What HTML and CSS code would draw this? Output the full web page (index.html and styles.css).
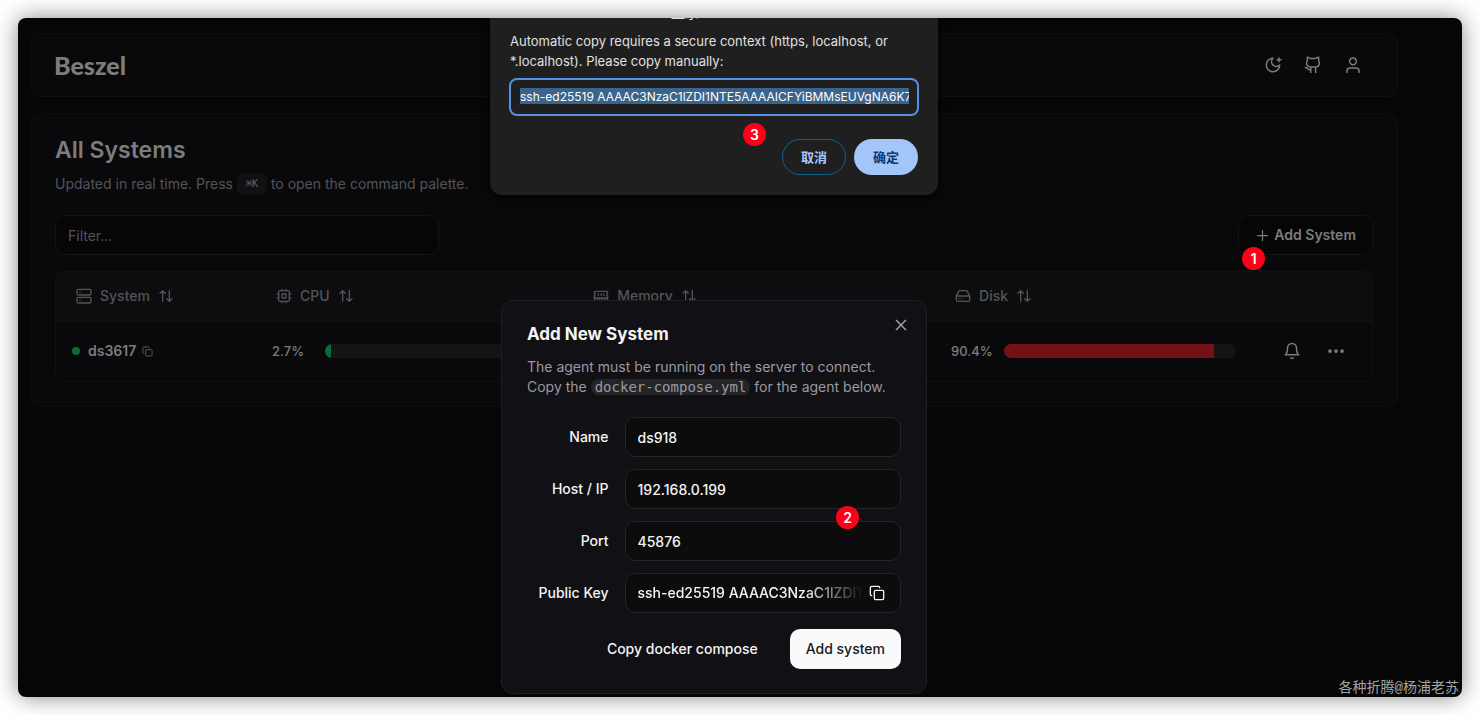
FILE: index.html
```html
<!DOCTYPE html>
<html lang="en">
<head>
<meta charset="utf-8">
<title>Beszel</title>
<link rel="stylesheet" href="styles.css">
</head>
<body>
<svg class="sprite" aria-hidden="true">
  <symbol id="sort" viewBox="0 0 24 24"><path d="m21 16-4 4-4-4M17 20V4M3 8l4-4 4 4M7 4v16"/></symbol>
  <symbol id="copy" viewBox="0 0 24 24"><rect x="8" y="8" width="14" height="14" rx="2"/><path d="M4 16c-1.100 0-2-.9-2-2V4c0-1.100.9-2 2-2h10c1.100 0 2 .9 2 2"/></symbol>
</svg>
<div class="screen">
  <div class="container">
    <header class="navbar">
      <a class="logo" href="#">Beszel</a>
      <nav class="nav-actions">
        <button class="icon-button" aria-label="Theme"><svg class="icon icon-lg" viewBox="0 0 24 24"><path d="M12 3a6 6 0 0 0 9 9 9 9 0 1 1-9-9M20 2.500v5M22.500 5h-5"/></svg></button>
        <a class="icon-button" href="#" aria-label="GitHub"><svg class="icon icon-lg" viewBox="0 0 24 24"><path d="M15.500 22v-7.500c3-.3 5-2 5-5 0-1.200-.4-2.200-1-3 .3-1.400.3-3-.2-5L15.500 3.200h-7L4.700 1.500c-.5 2-.5 3.600-.2 5-.6.8-1 1.800-1 3 0 3 2 4.700 5.500 5V22M9 18.700C5.500 19 4.600 15.300 1.800 15.300M9 14.500h6.500"/></svg></a>
        <button class="icon-button" aria-label="Account"><svg class="icon icon-lg" viewBox="0 0 24 24"><circle cx="12" cy="7" r="4.500"/><path d="M20 22v-2a4 4 0 0 0-4-4H8a4 4 0 0 0-4 4v2"/></svg></button>
      </nav>
    </header>

    <main class="card">
      <h1 class="card-title">All Systems</h1>
      <p class="card-text">Updated in real time. Press <kbd class="kbd">⌘K</kbd> to open the command palette.</p>
      <div class="toolbar">
        <input class="filter" type="text" placeholder="Filter..." aria-label="Filter">
        <div class="add-wrap">
          <button class="add-button"><svg class="icon icon-md" viewBox="0 0 24 24"><path d="M4 12h16M12 4v16"/></svg>Add System</button>
          <span class="step step-1">1</span>
        </div>
      </div>
      <div class="table-frame">
        <table class="table">
          <colgroup><col class="col-system"><col class="col-cpu"><col class="col-memory"><col class="col-disk"><col></colgroup>
          <thead>
            <tr>
              <th><button class="sort"><svg class="icon" viewBox="0 0 24 24"><rect x="1.500" y="2" width="21" height="8.500" rx="2"/><rect x="1.500" y="14" width="21" height="8.500" rx="2"/><path d="M6 6.200v.1M6 18.200v.1"/></svg>System<svg class="icon"><use href="#sort"/></svg></button></th>
              <th><button class="sort"><svg class="icon" viewBox="0 0 24 24"><rect x="4" y="4" width="16" height="16" rx="2"/><rect x="9" y="9" width="6" height="6" rx="1"/><path d="M15 2v2M15 20v2M2 15h2M2 9h2M20 15h2M20 9h2M9 2v2M9 20v2"/></svg>CPU<svg class="icon"><use href="#sort"/></svg></button></th>
              <th><button class="sort"><svg class="icon" viewBox="0 0 24 24"><path d="M6 19v-3M10 19v-3M14 19v-3M18 19v-3M8 11V9M16 11V9M12 11V9M2 15h20M2 7a2 2 0 0 1 2-2h16a2 2 0 0 1 2 2v1.100a2 2 0 0 0 0 3.800V17a2 2 0 0 1-2 2H4a2 2 0 0 1-2-2v-5.100a2 2 0 0 0 0-3.800Z"/></svg>Memory<svg class="icon"><use href="#sort"/></svg></button></th>
              <th><button class="sort"><svg class="icon" viewBox="0 0 24 24"><path d="M22 12H2M5.450 5.110 2 12v6a2 2 0 0 0 2 2h16a2 2 0 0 0 2-2v-6l-3.450-6.890A2 2 0 0 0 16.760 4H7.240a2 2 0 0 0-1.790 1.110ZM6 16h.01M10 16h.01"/></svg>Disk<svg class="icon"><use href="#sort"/></svg></button></th>
              <th></th>
            </tr>
          </thead>
          <tbody>
            <tr>
              <td><div class="system"><span class="dot"></span>ds3617<button class="copy-name" aria-label="Copy name"><svg class="icon icon-sm"><use href="#copy"/></svg></button></div></td>
              <td><div class="meter"><span class="value">2.7%</span><span class="track"><span class="fill ok" style="width:2.7%"></span></span></div></td>
              <td><div class="meter"><span class="track"></span></div></td>
              <td><div class="meter"><span class="value">90.4%</span><span class="track"><span class="fill high" style="width:90.4%"></span></span></div></td>
              <td class="actions-cell"><div class="actions">
                <button class="icon-button" aria-label="Alerts"><svg class="icon icon-lg" viewBox="0 0 24 24"><path d="M6 8a6 6 0 0 1 12 0c0 7 3 9 3 9H3s3-2 3-9M10.300 21a1.940 1.940 0 0 0 3.400 0"/></svg></button>
                <button class="icon-button" aria-label="More"><svg class="icon icon-lg dots" viewBox="0 0 24 24"><circle cx="4" cy="12" r="2.500"/><circle cx="12" cy="12" r="2.500"/><circle cx="20" cy="12" r="2.500"/></svg></button>
              </div></td>
            </tr>
          </tbody>
        </table>
      </div>
    </main>

    <section class="dialog" role="dialog" aria-labelledby="dialog-title">
      <button class="close" aria-label="Close"><svg class="icon" viewBox="0 0 24 24"><path d="M5 5l14 14M19 5 5 19"/></svg></button>
      <h2 class="dialog-title" id="dialog-title">Add New System</h2>
      <p class="dialog-text">The agent must be running on the server to connect. Copy the <code class="code">docker-compose.yml</code> for the agent below.</p>
      <form class="form">
        <label class="label" for="name">Name</label>
        <input class="field" id="name" type="text" value="ds918">
        <label class="label" for="host">Host / IP</label>
        <input class="field" id="host" type="text" value="192.168.0.199">
        <label class="label" for="port">Port</label>
        <input class="field" id="port" type="text" value="45876">
        <label class="label" for="key">Public Key</label>
        <div class="field key-field">
          <input class="key-input" id="key" type="text" readonly value="ssh-ed25519 AAAAC3NzaC1lZDI1NTE5AAAAICFYiBMMsEUVgNA6K7">
          <button class="key-copy" type="button" aria-label="Copy key"><svg class="icon"><use href="#copy"/></svg></button>
        </div>
        <div class="form-actions">
          <button class="ghost" type="button">Copy docker compose</button>
          <button class="primary" type="button">Add system</button>
        </div>
      </form>
      <span class="step step-2">2</span>
    </section>

    <section class="prompt" role="dialog" aria-label="Copy manually">
      <div class="prompt-title">显示</div>
      <label class="prompt-text" for="prompt-value">Automatic copy requires a secure context (https, localhost, or *.localhost). Please copy manually:</label>
      <input class="prompt-input" id="prompt-value" type="text" value="ssh-ed25519 AAAAC3NzaC1lZDI1NTE5AAAAICFYiBMMsEUVgNA6K7">
      <div class="prompt-actions">
        <button class="pill cancel">取消</button>
        <button class="pill confirm">确定</button>
      </div>
      <span class="step step-3">3</span>
    </section>
  </div>
  <div class="watermark">各种折腾@杨浦老苏</div>
</div>
</body>
</html>
```
FILE: styles.css
```css
* { box-sizing: border-box; }
body { margin: 0; padding: 18px; background: #fff; font-family: Inter, "Noto Sans CJK SC", sans-serif; font-size: 14px; line-height: 20px; color: #7c7c7d; }
button, input { font: inherit; color: inherit; background: none; border: 0; padding: 0; margin: 0; outline: 0; }
h1, h2, p { margin: 0; }
.sprite { position: absolute; width: 0; height: 0; }
.screen { position: relative; min-height: calc(100vh - 36px); padding: 15px 64px 15px 12px; border-radius: 8px; background: #060606; box-shadow: 0 0 22px rgba(0, 0, 0, .48); overflow: hidden; }
.container { display: flex; flex-direction: column; gap: 16px; }
.icon { width: 16px; height: 16px; flex: none; fill: none; stroke: currentColor; stroke-width: 2; stroke-linecap: round; stroke-linejoin: round; }
.icon-lg { width: 18px; height: 18px; }
.icon-md { width: 15px; height: 15px; }
.icon-sm { width: 11px; height: 11px; }
.dots { fill: currentColor; stroke: none; }
.icon-button { display: flex; align-items: center; justify-content: center; width: 40px; height: 40px; color: inherit; }

.navbar { display: flex; align-items: center; justify-content: space-between; height: 64px; padding: 0 24px 0 23px; border: 1px solid #101012; border-radius: 10px; background: #09090b; }
.logo { font-family: Lato, sans-serif; font-size: 25px; font-weight: 900; line-height: 32px; color: #7c7c7c; text-decoration: none; }
.nav-actions { display: flex; }

.card { padding: 24px; border: 1px solid #101012; border-radius: 12px; background: #09090b; }
.card-title { font-size: 23px; font-weight: 600; line-height: 24px; }
.card-text { margin-top: 12px; color: #545458; }
.kbd { display: inline-block; height: 20px; padding: 0 8px; border-radius: 4px; border: 1px solid #121214; background: #111113; font: 10px/18px "DejaVu Sans Mono", "DejaVu Sans", monospace; color: #646468; vertical-align: top; }
.toolbar { display: flex; align-items: center; justify-content: space-between; margin: 21px 0 16px; }
.filter { width: 384px; height: 40px; padding: 0 12px; border: 1px solid #131315; border-radius: 10px; background: #060606; }
.filter::placeholder { color: #545458; opacity: 1; }
.add-wrap { position: relative; }
.add-button { display: flex; align-items: center; gap: 4px; height: 40px; padding: 0 16px; border: 1px solid #131315; border-radius: 10px; background: #060606; font-weight: 600; }

.table-frame { border: 1px solid #111113; border-radius: 10px; overflow: hidden; }
.table { width: 100%; border-collapse: collapse; table-layout: fixed; }
.table th, .table td { padding: 0 16px; text-align: left; font-weight: 500; }
.table th { height: 49px; background: #0d0d0f; border-bottom: 1px solid #111113; color: #545458; }
.table td { height: 60px; }
.col-system { width: 15.2%; }
.col-cpu { width: 24.1%; }
.col-memory { width: 27.5%; }
.col-disk { width: 24.1%; }
.sort { display: flex; align-items: center; gap: 8px; padding: 0 4px; font-weight: 500; }
.sort .icon { stroke-width: 2; }
.system { display: flex; align-items: center; font-weight: 600; }
.dot { width: 8px; height: 8px; margin-right: 8px; border-radius: 50%; background: #0a6b37; }
.copy-name { display: flex; margin-left: 6px; color: #606063; }
.meter { display: flex; align-items: center; gap: 12px; }
.value { width: 41px; flex: none; font-size: 13px; }
.track { flex: 1; height: 14px; border-radius: 7px; background: #141416; overflow: hidden; }
.fill { display: block; height: 100%; }
.ok { background: #0a6b37; }
.high { background: #731116; }
.table .actions-cell { padding-left: 0; }
.actions { display: flex; justify-content: flex-end; gap: 4px; }

.step { position: absolute; width: 23px; height: 23px; border-radius: 50%; background: #ff0019; color: #fff; font: 600 14px/23px Inter, sans-serif; text-align: center; }
.step-1 { left: 4px; top: 32px; }
.step-2 { right: 67px; top: 205px; }
.step-3 { left: 253px; top: 105px; }

.dialog { position: absolute; left: 483px; bottom: 3px; width: 426px; padding: 24px 25px; border: 1px solid #1f1f22; border-radius: 12px; background: #111014; color: #f4f4f5; }
.dialog-title { font-size: 17px; font-weight: 700; line-height: 18px; }
.dialog-text { margin: 14px 0 20px; color: #9a9aa2; }
.code { padding: 0 4px; border-radius: 8px; background: #252528; font: 14px/16px "DejaVu Sans Mono", monospace; }
.close { position: absolute; right: 17px; top: 16px; display: flex; color: #a8a8ab; }
.form { display: grid; grid-template-columns: repeat(4, 1fr); gap: 12px 16px; align-items: center; font-weight: 500; }
.label { text-align: right; white-space: nowrap; }
.field { grid-column: span 3; width: 100%; height: 40px; padding: 0 12px; border: 1px solid #252528; border-radius: 10px; background: #0c0c0d; }
.key-field { display: flex; align-items: center; gap: 6px; padding-right: 15px; }
.key-input { flex: 1; min-width: 0; -webkit-mask-image: linear-gradient(to right, #000 74%, transparent); mask-image: linear-gradient(to right, #000 74%, transparent); }
.key-copy { display: flex; }
.form-actions { grid-column: 1 / -1; display: flex; justify-content: flex-end; gap: 16px; margin-top: 4px; }
.ghost, .primary { height: 40px; padding: 0 16px; border-radius: 10px; font-weight: 500; }
.primary { background: #fafafa; color: #18181b; }

.prompt { position: absolute; left: 472px; top: 0; width: 448px; padding: 0 20px 20px; border-radius: 0 0 12px 12px; background: #1f1f1f; color: #e0e0e0; box-shadow: 0 2px 8px #000; font-size: 13px; }
.prompt-title { height: 14px; padding-left: 161px; font-size: 14px; line-height: 20px; margin-top: -15px; margin-bottom: 14px; }
.prompt-text { display: block; font-weight: 400; }
.prompt-input { display: block; width: calc(100% + 2px); height: 38px; margin: 7px 0 23px -1px; padding: 8px 8px 10px 9px; border: 2px solid #5590e5; border-radius: 8px; background: linear-gradient(#3a648c, #3a648c) content-box; color: #fff; font-size: 12px; font-weight: 400; line-height: 16px; }
.prompt-actions { display: flex; justify-content: flex-end; gap: 8px; }
.pill { width: 64px; height: 36px; border-radius: 18px; font: 700 13px/20px "Noto Sans CJK SC", sans-serif; }
.cancel { border: 1px solid #0e638e; color: #a8c7fa; }
.confirm { background: #a3c5f7; color: #0b3a78; }
.watermark { position: absolute; right: 3px; bottom: 0; font: 14px/18px "Liberation Mono", "Noto Sans CJK SC", monospace; color: #a5a5a5; }
```
